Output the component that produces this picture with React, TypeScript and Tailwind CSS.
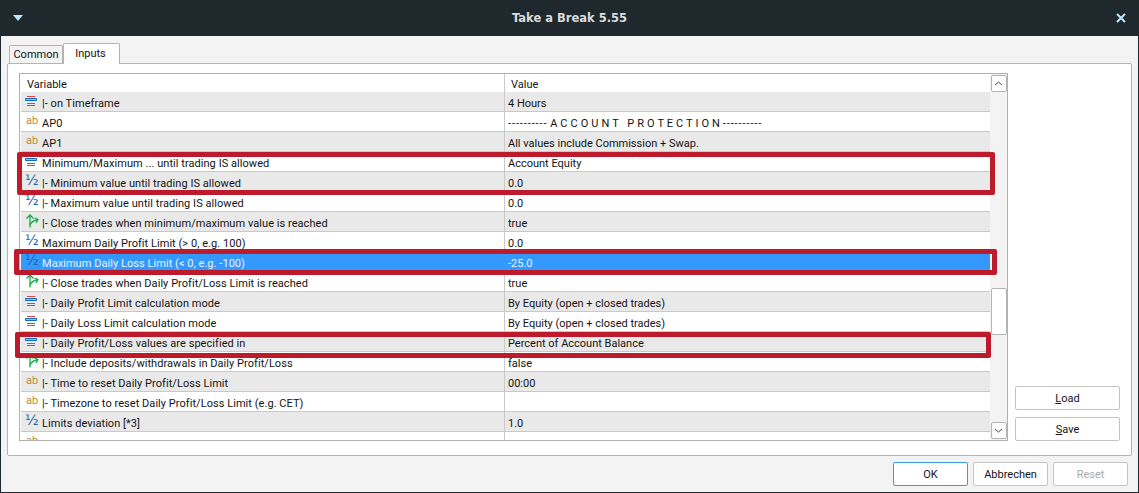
const FONT = "font-['Roboto',sans-serif]";

type Kind = "enum" | "ab" | "half" | "bool";

const rows: { kind: Kind; name: string; value: React.ReactNode; selected?: boolean }[] = [
  { kind: "enum", name: "|- on Timeframe", value: "4 Hours" },
  {
    kind: "ab",
    name: "AP0",
    value: (
      <>
        <span className="tracking-[0.9px]">----------</span> <span className="tracking-[0.15px]">A C C O U N T   P R O T E C T I O N</span>{" "}
        <span className="tracking-[0.9px]">----------</span>
      </>
    ),
  },
  { kind: "ab", name: "AP1", value: "All values include Commission + Swap." },
  { kind: "enum", name: "Minimum/Maximum ... until trading IS allowed", value: "Account Equity" },
  { kind: "half", name: "|- Minimum value until trading IS allowed", value: "0.0" },
  { kind: "half", name: "|- Maximum value until trading IS allowed", value: "0.0" },
  { kind: "bool", name: "|- Close trades when minimum/maximum value is reached", value: "true" },
  { kind: "half", name: "Maximum Daily Profit Limit (> 0, e.g. 100)", value: "0.0" },
  { kind: "half", name: "Maximum Daily Loss Limit (< 0, e.g. -100)", value: "-25.0", selected: true },
  { kind: "bool", name: "|- Close trades when Daily Profit/Loss Limit is reached", value: "true" },
  { kind: "enum", name: "|- Daily Profit Limit calculation mode", value: "By Equity (open + closed trades)" },
  { kind: "enum", name: "|- Daily Loss Limit calculation mode", value: "By Equity (open + closed trades)" },
  { kind: "enum", name: "|- Daily Profit/Loss values are specified in", value: "Percent of Account Balance" },
  { kind: "bool", name: "|- Include deposits/withdrawals in Daily Profit/Loss", value: "false" },
  { kind: "ab", name: "|- Time to reset Daily Profit/Loss Limit", value: "00:00" },
  { kind: "ab", name: "|- Timezone to reset Daily Profit/Loss Limit (e.g. CET)", value: "" },
  { kind: "half", name: "Limits deviation [*3]", value: "1.0" },
  { kind: "ab", name: "", value: "" },
];

function RowIcon({ kind }: { kind: Kind }) {
  if (kind === "enum") {
    return (
      <svg width="12" height="11" viewBox="0 0 12 11" className="block">
        <path d="M2 .5h8" stroke="#e2403a" />
        <path d="M.5 2.5h11v2H.5z" fill="#9cc4e6" stroke="#0f6cc0" />
        <path d="M2 7.5h8M2 9.5h8" stroke="#e2403a" />
      </svg>
    );
  }
  if (kind === "bool") {
    return (
      <svg width="14" height="14" viewBox="0 0 14 14" fill="none" className="block -translate-y-[1px]">
        <path d="M5 13.5V2M1.5 4.5 5 1l3.5 3.5" stroke="#1fa84a" strokeWidth="1.3" />
        <path d="M5 11c1-3 3.5-4.5 8-5.5M9.5 4l3.5 1.5L11 9" stroke="#1fa84a" strokeWidth="1.3" />
      </svg>
    );
  }
  if (kind === "ab") {
    return <span className="block pl-[1px] text-[11px] leading-[12px] text-[#c08a33] -translate-y-[1px]">ab</span>;
  }
  return <span className="block text-[14px] leading-[14px] text-[#1f64a3] -translate-y-[2px] font-['DejaVu_Sans',sans-serif]">½</span>;
}

function Row({ kind, name, value, selected, index }: (typeof rows)[number] & { index: number }) {
  const bg = selected ? "bg-[#3399ff] text-[#e8f3ff]" : index % 2 === 0 ? "bg-[#e9e9e9]" : "bg-white";
  return (
    <div className={`flex h-[20px] shrink-0 border-b border-[#c9c9c9] ${bg}`}>
      <div className={`flex w-[484px] shrink-0 items-center border-r pl-[4px] ${selected ? "border-[#3399ff]" : "border-[#c9c9c9]"}`}>
        <span className="w-[17px] shrink-0"><RowIcon kind={kind} /></span>
        <span className="whitespace-pre pt-[6px] tracking-[0.05px]">{name}</span>
      </div>
      <div className="flex items-center whitespace-pre pl-[3px] pt-[6px]">
        <span>{value}</span>
      </div>
    </div>
  );
}

function Button({ label, primary, disabled, className }: { label: React.ReactNode; primary?: boolean; disabled?: boolean; className: string }) {
  const tone = primary ? "border-[#3a9be8]" : "border-[#c4c4c4]";
  return (
    <div
      className={`flex h-[24px] items-center justify-center rounded-[2px] border bg-white pt-[2px] ${tone} ${disabled ? "text-[#a8a8a8]" : "text-[#141414]"} ${className}`}
    >
      {label}
    </div>
  );
}

function RedBox({ className }: { className: string }) {
  return <div className={`absolute rounded-[2px] border-[5px] border-[#bd1b2b] ${className}`} />;
}

export default function App() {
  return (
    <div className={`relative flex h-[493px] w-[1139px] flex-col overflow-hidden bg-[#1f282c] text-[11px] text-[#141414] ${FONT}`}>
      {/* title bar */}
      <div className="flex h-[36px] shrink-0 items-center justify-between px-[13px]">
        <svg width="10" height="6" viewBox="0 0 10 6">
          <path d="M0 0h10L5 6z" fill="#bfe6fb" />
        </svg>
        <span className="pt-[2px] font-['DejaVu_Sans',sans-serif] text-[11.5px] font-bold text-[#d8dcde]">Take a Break 5.55</span>
        <svg width="10" height="10" viewBox="0 0 10 10">
          <path d="M1 1l8 8M9 1l-8 8" stroke="#bfe6fb" strokeWidth="2" />
        </svg>
      </div>

      <div className="mx-[1px] mb-[1px] flex min-h-0 flex-1 flex-col bg-[#f3f3f3] px-[6px] pt-[7px]">
        {/* tabs */}
        <div className="relative z-10 flex h-[20px] shrink-0 items-end pl-[2px]">
          <div className="flex h-[18px] w-[54px] items-center justify-center rounded-t-[2px] border border-b-0 border-[#b4b4b4] bg-[#f3f3f3] pt-[2px]">
            Common
          </div>
          <div className="-mb-[1px] flex h-[21px] w-[57px] items-center justify-center rounded-t-[2px] border border-b-0 border-[#b4b4b4] bg-white pr-[2px]">
            Inputs
          </div>
        </div>

        {/* panel */}
        <div className="flex h-[393px] shrink-0 gap-[7px] rounded-[2px] border border-[#b4b4b4] bg-white pl-[11px] pr-[11px] pt-[9px]">
          <div className="flex h-[368px] w-[989px] shrink-0 border border-[#b0b0b0] bg-white pl-[1px]">
            <div className="flex min-w-0 flex-1 flex-col overflow-hidden">
              <div className="flex h-[18px] shrink-0">
                <div className="flex w-[484px] items-center border-r border-[#c9c9c9] pl-[6px] pt-[4px]">Variable</div>
                <div className="flex items-center pl-[6px] pt-[4px]">Value</div>
              </div>
              {rows.map((r, i) => (
                <Row key={i} index={i} {...r} />
              ))}
            </div>
            {/* scrollbar */}
            <div className="flex w-[17px] shrink-0 flex-col items-center bg-[#f3f3f3] py-[1px]">
              <div className="flex h-[17px] w-[16px] items-center justify-center rounded-[2px] border border-[#b4b4b4] bg-white">
                <svg width="9" height="5" viewBox="0 0 9 5" fill="none">
                  <path d="M1 4l3.5-3L8 4" stroke="#444" />
                </svg>
              </div>
              <div className="mt-[196px] h-[47px] w-[16px] rounded-[2px] border border-[#b4b4b4] bg-white" />
              <div className="mt-auto flex h-[17px] w-[16px] items-center justify-center rounded-[2px] border border-[#b4b4b4] bg-white">
                <svg width="9" height="5" viewBox="0 0 9 5" fill="none">
                  <path d="M1 1l3.5 3L8 1" stroke="#444" />
                </svg>
              </div>
            </div>
          </div>
          <div className="flex h-[368px] flex-1 flex-col justify-end gap-[7px]">
            <Button className="w-[105px]" label={<span><span className="underline">L</span>oad</span>} />
            <Button className="w-[105px]" label={<span><span className="underline">S</span>ave</span>} />
          </div>
        </div>

        {/* footer */}
        <div className="flex flex-1 items-start justify-end gap-[5px] pr-[4px] pt-[6px]">
          <Button primary className="w-[75px]" label="OK" />
          <Button className="w-[75px]" label="Abbrechen" />
          <Button disabled className="w-[75px]" label="Reset" />
        </div>
      </div>

      {/* annotations drawn over the dialog */}
      <RedBox className="left-[17px] top-[152px] h-[43px] w-[978px]" />
      <RedBox className="left-[14px] top-[249px] h-[26px] w-[983px]" />
      <RedBox className="left-[15px] top-[332px] h-[26px] w-[976px]" />
    </div>
  );
}
